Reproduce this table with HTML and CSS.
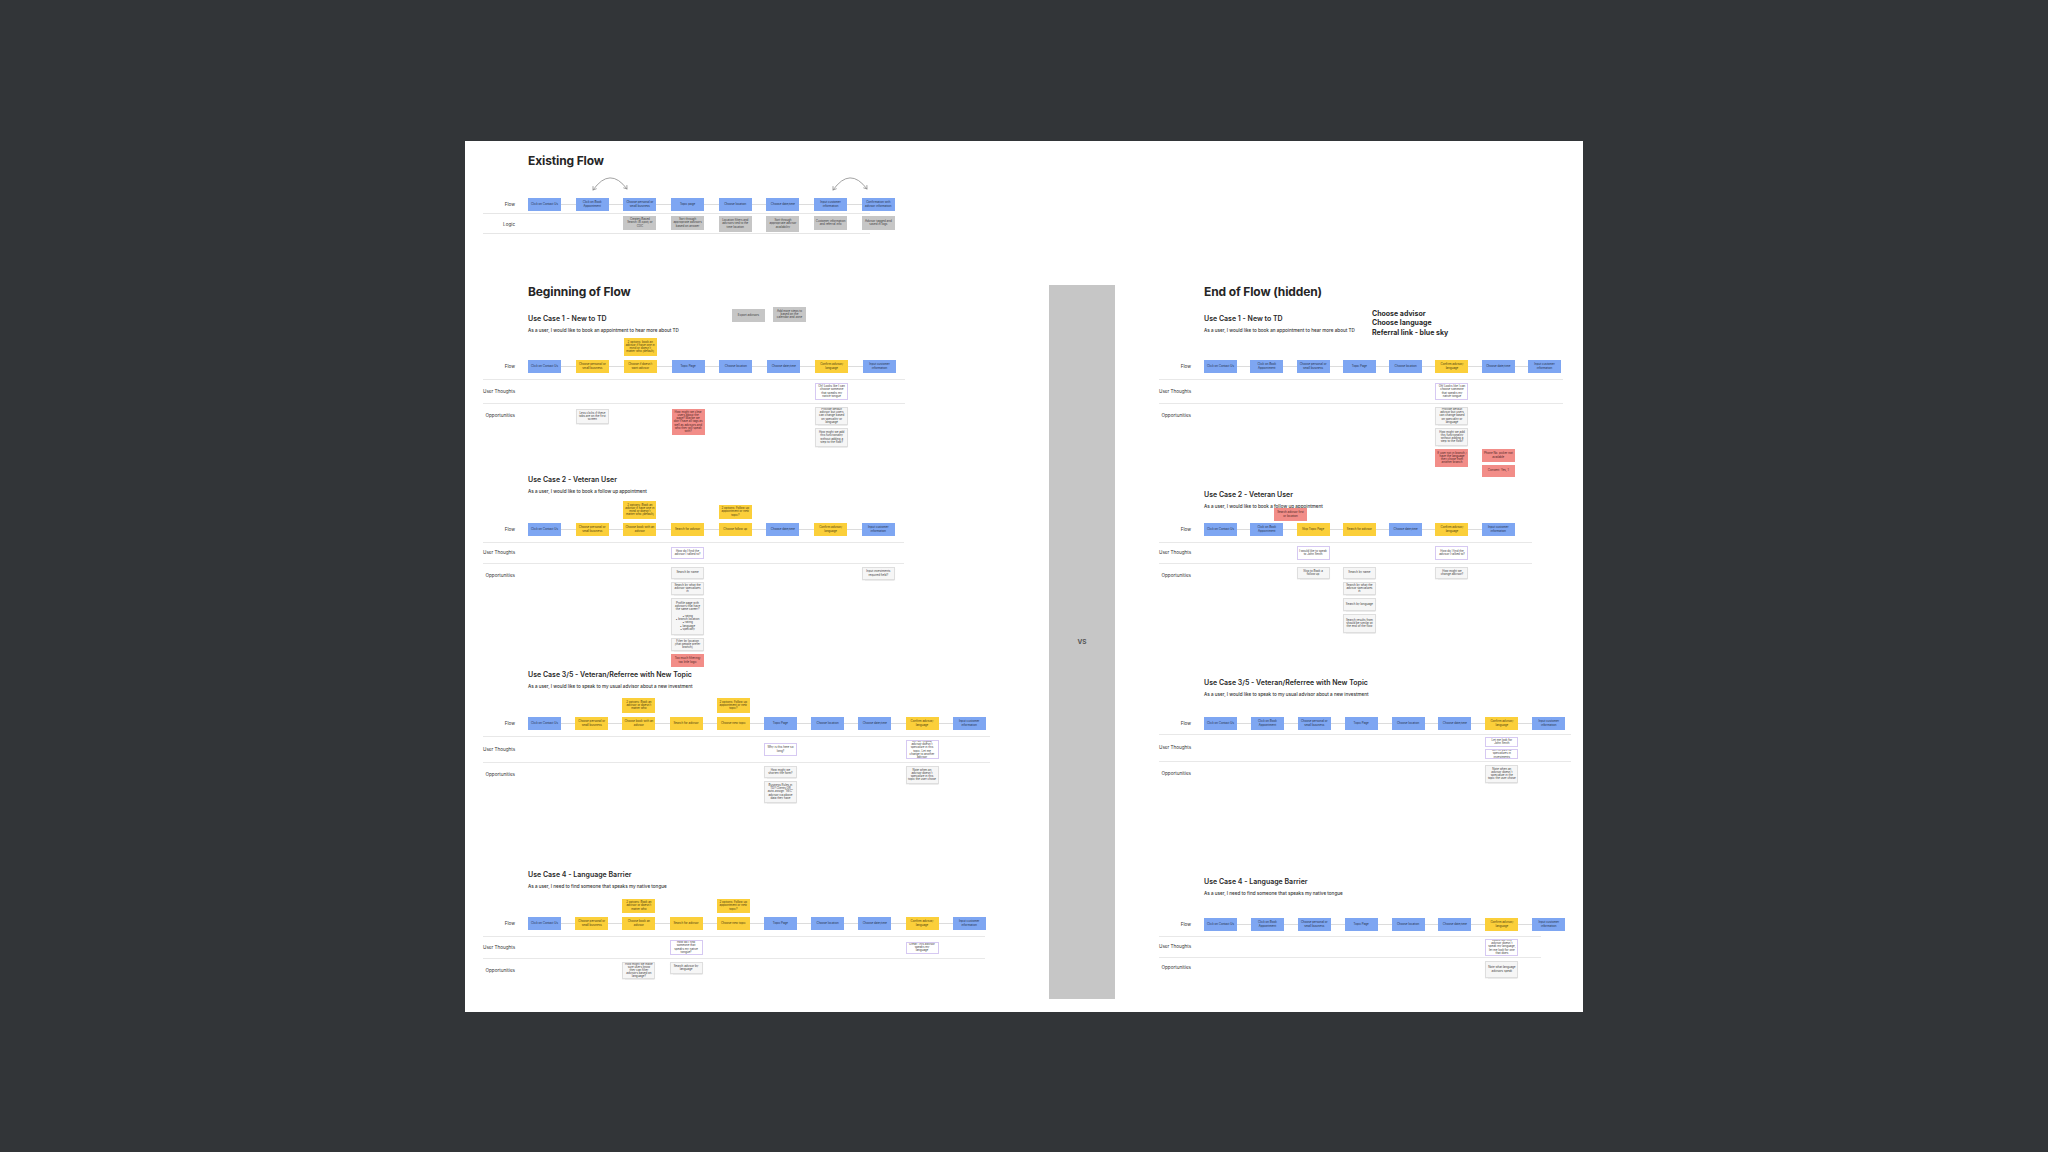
FILE: index.html
```html
<!DOCTYPE html>
<html>
<head>
<meta charset="utf-8">
<title>Flow board</title>
<link rel="stylesheet" href="styles.css">
</head>
<body>
<div class="board">
  <section class="ex">
    <h2 class="title">Existing Flow</h2>
    <svg class="arrows" viewBox="0 0 380 30" width="380" height="30">
      <path d="M65 22 Q82 -2 99 21" />
      <path d="M68.3 20.8 L65 22 L65 18.5" />
      <path d="M98.9 17.5 L99 21 L95.7 19.9" />
      <path d="M305 22 Q322 -2 339 21" />
      <path d="M308.3 20.8 L305 22 L305 18.5" />
      <path d="M338.9 17.5 L339 21 L335.7 19.9" />
    </svg>
    <div class="lane flow">
      <div class="lbl">Flow</div>
      <div class="cells">
        <div class="cell"><div class="c b">Click on Contact Us</div></div>
        <div class="cell"><div class="c b">Click on Book Appointment</div></div>
        <div class="cell"><div class="c b">Choose personal or small business</div></div>
        <div class="cell"><div class="c b">Topic page</div></div>
        <div class="cell"><div class="c b">Choose location</div></div>
        <div class="cell"><div class="c b">Choose date/time</div></div>
        <div class="cell"><div class="c b">Input customer information</div></div>
        <div class="cell"><div class="c b">Confirmation with advisor information</div></div>
      </div>
    </div>
    <div class="lane logic">
      <div class="lbl">Logic</div>
      <div class="cells">
        <div class="cell"></div>
        <div class="cell"></div>
        <div class="cell"><div class="c g">Creates Based Search (B-spot) or COC</div></div>
        <div class="cell"><div class="c g">Sort through appropriate advisors based on answer</div></div>
        <div class="cell"><div class="c g h16">Location filters and advisors tied to the time location</div></div>
        <div class="cell"><div class="c g h16">Sort through appropriate advisor availability</div></div>
        <div class="cell"><div class="c g">Customer information and referral info</div></div>
        <div class="cell"><div class="c g">Advisor tagged and saved in logs</div></div>
      </div>
    </div>
  </section>

  <div class="row">
    <div class="col col-left">
      <h2 class="title">Beginning of Flow</h2>

      <section class="uc s-l1">
        <div class="head">
          <h3>Use Case 1 - New to TD</h3>
          <p>As a user, I would like to book an appointment to hear more about TD</p>
        </div>
        <div class="notes">
          <div class="c g h13">Export advisors</div>
          <div class="c g h15">Add more steps to based on the calendar and zone</div>
        </div>
        <div class="lane above">
          <div class="lbl"></div>
          <div class="cells">
            <div class="cell"></div><div class="cell"></div>
            <div class="cell"><div class="c y h18">2 options: book an advisor if have one in mind or doesn't matter who (default)</div></div>
            <div class="cell"></div><div class="cell"></div><div class="cell"></div><div class="cell"></div><div class="cell"></div>
          </div>
        </div>
        <div class="lane flow">
          <div class="lbl">Flow</div>
          <div class="cells">
            <div class="cell"><div class="c b">Click on Contact Us</div></div>
            <div class="cell"><div class="c y">Choose personal or small business</div></div>
            <div class="cell"><div class="c y">Choose if doesn't want advisor</div></div>
            <div class="cell"><div class="c b">Topic Page</div></div>
            <div class="cell"><div class="c b">Choose location</div></div>
            <div class="cell"><div class="c b">Choose date/time</div></div>
            <div class="cell"><div class="c y">Confirm advisor/ language</div></div>
            <div class="cell"><div class="c b">Input customer information</div></div>
          </div>
        </div>
        <div class="lane thoughts">
          <div class="lbl">User Thoughts</div>
          <div class="cells">
            <div class="cell"></div><div class="cell"></div><div class="cell"></div><div class="cell"></div><div class="cell"></div><div class="cell"></div>
            <div class="cell"><div class="c t h17">Oh! Looks like I can choose someone that speaks my native tongue</div></div>
            <div class="cell"></div>
          </div>
        </div>
        <div class="lane opps">
          <div class="lbl">Opportunities</div>
          <div class="cells">
            <div class="cell"></div>
            <div class="cell"><div class="c w h15 down">Less clicks if these tabs are on the first screen</div></div>
            <div class="cell"></div>
            <div class="cell"><div class="c r h26 down">How might we clear users about the page? Maybe we don't have all tags as well as advisors and who they will speak with?</div></div>
            <div class="cell"></div><div class="cell"></div>
            <div class="cell"><div class="c w h18">Provide default advisor but users can change based on speciality or language</div><div class="c w h19">How might we add this functionality without adding a step to the flow?</div></div>
            <div class="cell"></div>
          </div>
        </div>
      </section>

      <section class="uc s-l2">
        <div class="head">
          <h3>Use Case 2 - Veteran User</h3>
          <p>As a user, I would like to book a follow up appointment</p>
        </div>
        <div class="lane above">
          <div class="lbl"></div>
          <div class="cells">
            <div class="cell"></div><div class="cell"></div>
            <div class="cell"><div class="c y h18">2 options: Book an advisor if have one in mind or doesn't matter who (default)</div></div>
            <div class="cell"></div>
            <div class="cell"><div class="c y h14">2 options: Follow up appointment or new topic?</div></div>
            <div class="cell"></div><div class="cell"></div><div class="cell"></div>
          </div>
        </div>
        <div class="lane flow">
          <div class="lbl">Flow</div>
          <div class="cells">
            <div class="cell"><div class="c b">Click on Contact Us</div></div>
            <div class="cell"><div class="c y">Choose personal or small business</div></div>
            <div class="cell"><div class="c y">Choose book with an advisor</div></div>
            <div class="cell"><div class="c y">Search for advisor</div></div>
            <div class="cell"><div class="c y">Choose follow up</div></div>
            <div class="cell"><div class="c b">Choose date/time</div></div>
            <div class="cell"><div class="c y">Confirm advisor/ language</div></div>
            <div class="cell"><div class="c b">Input customer information</div></div>
          </div>
        </div>
        <div class="lane thoughts">
          <div class="lbl">User Thoughts</div>
          <div class="cells">
            <div class="cell"></div><div class="cell"></div><div class="cell"></div>
            <div class="cell"><div class="c t h12">How do I find the advisor I talked to?</div></div>
            <div class="cell"></div><div class="cell"></div><div class="cell"></div><div class="cell"></div>
          </div>
        </div>
        <div class="lane opps">
          <div class="lbl">Opportunities</div>
          <div class="cells">
            <div class="cell"></div><div class="cell"></div><div class="cell"></div>
            <div class="cell">
              <div class="c w h12">Search by name</div>
              <div class="c w h13">Search by what the advisor specializes in</div>
              <div class="c w h37">Profile page with advisors that have the same career?<br><br>• rating<br>• branch location<br>• rating<br>• language<br>• specialty</div>
              <div class="c w h13">Filter by location (that people prefer branch)</div>
              <div class="c r h13">Too much filtering/ too little logic</div>
            </div>
            <div class="cell"></div><div class="cell"></div><div class="cell"></div>
            <div class="cell"><div class="c w h13">Input investments required field?</div></div>
          </div>
        </div>
      </section>

      <section class="uc s-l3">
        <div class="head">
          <h3>Use Case 3/5 - Veteran/Referree with New Topic</h3>
          <p>As a user, I would like to speak to my usual advisor about a new investment</p>
        </div>
        <div class="lane above">
          <div class="lbl"></div>
          <div class="cells">
            <div class="cell"></div><div class="cell"></div>
            <div class="cell"><div class="c y h15">2 options: Book an advisor or doesn't matter who</div></div>
            <div class="cell"></div>
            <div class="cell"><div class="c y h15">2 options: Follow up appointment or new topic?</div></div>
            <div class="cell"></div><div class="cell"></div><div class="cell"></div><div class="cell"></div><div class="cell"></div>
          </div>
        </div>
        <div class="lane flow">
          <div class="lbl">Flow</div>
          <div class="cells">
            <div class="cell"><div class="c b">Click on Contact Us</div></div>
            <div class="cell"><div class="c y">Choose personal or small business</div></div>
            <div class="cell"><div class="c y">Choose book with an advisor</div></div>
            <div class="cell"><div class="c y">Search for advisor</div></div>
            <div class="cell"><div class="c y">Choose new topic</div></div>
            <div class="cell"><div class="c b">Topic Page</div></div>
            <div class="cell"><div class="c b">Choose location</div></div>
            <div class="cell"><div class="c b">Choose date/time</div></div>
            <div class="cell"><div class="c y">Confirm advisor/ language</div></div>
            <div class="cell"><div class="c b">Input customer information</div></div>
          </div>
        </div>
        <div class="lane thoughts">
          <div class="lbl">User Thoughts</div>
          <div class="cells">
            <div class="cell"></div><div class="cell"></div><div class="cell"></div><div class="cell"></div><div class="cell"></div>
            <div class="cell"><div class="c t h13">Why is this here so long?</div></div>
            <div class="cell"></div><div class="cell"></div>
            <div class="cell"><div class="c t h19">Oh! My regular advisor doesn't specialize in this topic. Let me change to another advisor</div></div>
            <div class="cell"></div>
          </div>
        </div>
        <div class="lane opps">
          <div class="lbl">Opportunities</div>
          <div class="cells">
            <div class="cell"></div><div class="cell"></div><div class="cell"></div><div class="cell"></div><div class="cell"></div>
            <div class="cell"><div class="c w h12">How might we shorten the form?</div><div class="c w h22">Business Rules in TD? Clients OR auto-assign "SEC" advisor via above data they have</div></div>
            <div class="cell"></div><div class="cell"></div>
            <div class="cell"><div class="c w h18">Note when an advisor doesn't specialize in this topic the user chose</div></div>
            <div class="cell"></div>
          </div>
        </div>
      </section>

      <section class="uc s-l4">
        <div class="head">
          <h3>Use Case 4 - Language Barrier</h3>
          <p>As a user, I need to find someone that speaks my native tongue</p>
        </div>
        <div class="lane above">
          <div class="lbl"></div>
          <div class="cells">
            <div class="cell"></div><div class="cell"></div>
            <div class="cell"><div class="c y h14">2 options: Book an advisor or doesn't matter who</div></div>
            <div class="cell"></div>
            <div class="cell"><div class="c y h14">2 options: Follow up appointment or new topic?</div></div>
            <div class="cell"></div><div class="cell"></div><div class="cell"></div><div class="cell"></div><div class="cell"></div>
          </div>
        </div>
        <div class="lane flow">
          <div class="lbl">Flow</div>
          <div class="cells">
            <div class="cell"><div class="c b">Click on Contact Us</div></div>
            <div class="cell"><div class="c y">Choose personal or small business</div></div>
            <div class="cell"><div class="c y">Choose book an advisor</div></div>
            <div class="cell"><div class="c y">Search for advisor</div></div>
            <div class="cell"><div class="c y">Choose new topic</div></div>
            <div class="cell"><div class="c b">Topic Page</div></div>
            <div class="cell"><div class="c b">Choose location</div></div>
            <div class="cell"><div class="c b">Choose date/time</div></div>
            <div class="cell"><div class="c y">Confirm advisor/ language</div></div>
            <div class="cell"><div class="c b">Input customer information</div></div>
          </div>
        </div>
        <div class="lane thoughts">
          <div class="lbl">User Thoughts</div>
          <div class="cells">
            <div class="cell"></div><div class="cell"></div><div class="cell"></div>
            <div class="cell"><div class="c t h15">How do I find someone that speaks my native tongue?</div></div>
            <div class="cell"></div><div class="cell"></div><div class="cell"></div><div class="cell"></div>
            <div class="cell"><div class="c t h12">Great! This advisor speaks my language</div></div>
            <div class="cell"></div>
          </div>
        </div>
        <div class="lane opps">
          <div class="lbl">Opportunities</div>
          <div class="cells">
            <div class="cell"></div><div class="cell"></div>
            <div class="cell"><div class="c w h17">How might we make sure users know they can filter advisors based on language?</div></div>
            <div class="cell"><div class="c w h12">Search advisor by language</div></div>
            <div class="cell"></div><div class="cell"></div><div class="cell"></div><div class="cell"></div><div class="cell"></div><div class="cell"></div>
          </div>
        </div>
      </section>
    </div>

    <div class="vs">VS</div>

    <div class="col col-right">
      <h2 class="title">End of Flow (hidden)</h2>

      <section class="uc s-r1">
        <div class="head">
          <h3>Use Case 1 - New to TD</h3>
          <p>As a user, I would like to book an appointment to hear more about TD</p>
        </div>
        <div class="note">Choose advisor<br>Choose language<br>Referral link - blue sky</div>
        <div class="lane above"><div class="lbl"></div></div>
        <div class="lane flow">
          <div class="lbl">Flow</div>
          <div class="cells">
            <div class="cell"><div class="c b">Click on Contact Us</div></div>
            <div class="cell"><div class="c b">Click on Book Appointment</div></div>
            <div class="cell"><div class="c b">Choose personal or small business</div></div>
            <div class="cell"><div class="c b">Topic Page</div></div>
            <div class="cell"><div class="c b">Choose location</div></div>
            <div class="cell"><div class="c y">Confirm advisor/ language</div></div>
            <div class="cell"><div class="c b">Choose date/time</div></div>
            <div class="cell"><div class="c b">Input customer information</div></div>
          </div>
        </div>
        <div class="lane thoughts">
          <div class="lbl">User Thoughts</div>
          <div class="cells">
            <div class="cell"></div><div class="cell"></div><div class="cell"></div><div class="cell"></div><div class="cell"></div>
            <div class="cell"><div class="c t h17">Oh! Looks like I can choose someone that speaks my native tongue</div></div>
            <div class="cell"></div><div class="cell"></div>
          </div>
        </div>
        <div class="lane opps">
          <div class="lbl">Opportunities</div>
          <div class="cells">
            <div class="cell"></div><div class="cell"></div><div class="cell"></div><div class="cell"></div><div class="cell"></div>
            <div class="cell">
              <div class="c w h18">Provide default advisor but users can change based on speciality or language</div>
              <div class="c w h18">How might we add this functionality without adding a step to the flow?</div>
              <div class="c r h18">If user not in branch / have the language they chose from another branch</div>
            </div>
            <div class="cell push"><div class="c r h13">Phone No. picker not available</div><div class="c r h12">Consent: Yes, 1</div></div>
            <div class="cell"></div>
          </div>
        </div>
      </section>

      <section class="uc s-r2">
        <div class="head">
          <h3>Use Case 2 - Veteran User</h3>
          <p>As a user, I would like to book a follow up appointment</p>
        </div>
        <div class="c r h13 overlay">Search advisor first or location</div>
        <div class="lane above"><div class="lbl"></div></div>
        <div class="lane flow">
          <div class="lbl">Flow</div>
          <div class="cells">
            <div class="cell"><div class="c b">Click on Contact Us</div></div>
            <div class="cell"><div class="c b">Click on Book Appointment</div></div>
            <div class="cell"><div class="c y">Skip Topic Page</div></div>
            <div class="cell"><div class="c y">Search for advisor</div></div>
            <div class="cell"><div class="c b">Choose date/time</div></div>
            <div class="cell"><div class="c y">Confirm advisor/ language</div></div>
            <div class="cell"><div class="c b">Input customer information</div></div>
          </div>
        </div>
        <div class="lane thoughts">
          <div class="lbl">User Thoughts</div>
          <div class="cells">
            <div class="cell"></div><div class="cell"></div>
            <div class="cell"><div class="c t h14">I would like to speak to John Smith</div></div>
            <div class="cell"></div><div class="cell"></div>
            <div class="cell"><div class="c t h14">How do I find the advisor I talked to?</div></div>
            <div class="cell"></div>
          </div>
        </div>
        <div class="lane opps">
          <div class="lbl">Opportunities</div>
          <div class="cells">
            <div class="cell"></div><div class="cell"></div>
            <div class="cell"><div class="c w h12">Skip to Book a follow up</div></div>
            <div class="cell">
              <div class="c w h12">Search by name</div>
              <div class="c w h13">Search by what the advisor specializes in</div>
              <div class="c w h13">Search by language</div>
              <div class="c w h19">Search results from should be similar at the end of the flow</div>
            </div>
            <div class="cell"></div>
            <div class="cell"><div class="c w h12">How might we change advisor?</div></div>
            <div class="cell"></div>
          </div>
        </div>
      </section>

      <section class="uc s-r3">
        <div class="head">
          <h3>Use Case 3/5 - Veteran/Referree with New Topic</h3>
          <p>As a user, I would like to speak to my usual advisor about a new investment</p>
        </div>
        <div class="lane above"><div class="lbl"></div></div>
        <div class="lane flow">
          <div class="lbl">Flow</div>
          <div class="cells">
            <div class="cell"><div class="c b">Click on Contact Us</div></div>
            <div class="cell"><div class="c b">Click on Book Appointment</div></div>
            <div class="cell"><div class="c b">Choose personal or small business</div></div>
            <div class="cell"><div class="c b">Topic Page</div></div>
            <div class="cell"><div class="c b">Choose location</div></div>
            <div class="cell"><div class="c b">Choose date/time</div></div>
            <div class="cell"><div class="c y">Confirm advisor/ language</div></div>
            <div class="cell"><div class="c b">Input customer information</div></div>
          </div>
        </div>
        <div class="lane thoughts">
          <div class="lbl">User Thoughts</div>
          <div class="cells">
            <div class="cell"></div><div class="cell"></div><div class="cell"></div><div class="cell"></div><div class="cell"></div><div class="cell"></div>
            <div class="cell tight"><div class="c t h10">Let me look for John Smith</div><div class="c t h10">Oh I'm sure he specializes in investments</div></div>
            <div class="cell"></div>
          </div>
        </div>
        <div class="lane opps">
          <div class="lbl">Opportunities</div>
          <div class="cells">
            <div class="cell"></div><div class="cell"></div><div class="cell"></div><div class="cell"></div><div class="cell"></div><div class="cell"></div>
            <div class="cell"><div class="c w h18">Note when an advisor doesn't specialize in the topic the user chose</div></div>
            <div class="cell"></div>
          </div>
        </div>
      </section>

      <section class="uc s-r4">
        <div class="head">
          <h3>Use Case 4 - Language Barrier</h3>
          <p>As a user, I need to find someone that speaks my native tongue</p>
        </div>
        <div class="lane above"><div class="lbl"></div></div>
        <div class="lane flow">
          <div class="lbl">Flow</div>
          <div class="cells">
            <div class="cell"><div class="c b">Click on Contact Us</div></div>
            <div class="cell"><div class="c b">Click on Book Appointment</div></div>
            <div class="cell"><div class="c b">Choose personal or small business</div></div>
            <div class="cell"><div class="c b">Topic Page</div></div>
            <div class="cell"><div class="c b">Choose location</div></div>
            <div class="cell"><div class="c b">Choose date/time</div></div>
            <div class="cell"><div class="c y">Confirm advisor/ language</div></div>
            <div class="cell"><div class="c b">Input customer information</div></div>
          </div>
        </div>
        <div class="lane thoughts">
          <div class="lbl">User Thoughts</div>
          <div class="cells">
            <div class="cell"></div><div class="cell"></div><div class="cell"></div><div class="cell"></div><div class="cell"></div><div class="cell"></div>
            <div class="cell"><div class="c t h17">Looks like this advisor doesn't speak my language, let me look for one that does</div></div>
            <div class="cell"></div>
          </div>
        </div>
        <div class="lane opps">
          <div class="lbl">Opportunities</div>
          <div class="cells">
            <div class="cell"></div><div class="cell"></div><div class="cell"></div><div class="cell"></div><div class="cell"></div><div class="cell"></div>
            <div class="cell"><div class="c w h17">Note what language advisors speak</div></div>
            <div class="cell"></div>
          </div>
        </div>
      </section>
    </div>
  </div>
</div>
</body>
</html>
```

FILE: styles.css
```css
* { box-sizing: border-box; margin: 0; padding: 0; }

html, body { height: 100%; }

body {
  background: #323538;
  padding: 141px 0 0 465px;
  font-family: Inter, "Noto Sans", "Liberation Sans", sans-serif;
  color: #2a2a2a;
  overflow: hidden;
}

.board {
  width: 1118px;
  height: 871px;
  background: #ffffff;
  padding: 13px 0 0 18px;
}

.title {
  font-size: 12px;
  line-height: 14px;
  font-weight: 700;
  letter-spacing: -0.01em;
  padding-left: 45px;
  color: #262626;
}

/* existing flow */
.ex { --n: 8; --g: 14.7px; --w: 387px; }

.arrows {
  display: block;
  margin-left: 45px;
  width: 380px;
  height: 30px;
  fill: none;
  stroke: #8c8c8c;
  stroke-width: 0.8;
  stroke-linecap: round;
  stroke-linejoin: round;
}

.ex .flow { padding-bottom: 2px; border-bottom: 1px solid #e6e6e6; }
.ex .logic { height: 20px; padding-top: 2px; border-bottom: 1px solid #e6e6e6; }
.ex .logic .cells { align-items: start; }
.ex .logic .c { height: 14px; }
.ex .logic .c.h16 { height: 16px; }

/* lanes */
.lane {
  display: flex;
  width: var(--w);
}

.lbl {
  flex: none;
  width: 45px;
  padding-right: 13px;
  text-align: right;
  font-size: 4.6px;
  line-height: 6px;
  color: #333;
  align-self: center;
  white-space: nowrap;
}

.cells {
  flex: none;
  display: grid;
  grid-template-columns: repeat(var(--n), 33px);
  column-gap: var(--g);
}

.cell {
  display: flex;
  flex-direction: column;
  gap: 3px;
}
.cell.tight { gap: 2px; }

.flow .cells {
  background: linear-gradient(#dcdcdc, #dcdcdc) center / 100% 1px no-repeat;
}

.flow { padding-bottom: 6px; }

.above { height: var(--ah); }
.above .cells { align-items: end; padding-bottom: 4px; height: 100%; }

.thoughts {
  border-top: 1px solid #e8e8e8;
  padding: 3px 0;
  min-height: 21px;
}
.thoughts .cells { align-items: center; }

.opps {
  border-top: 1px solid #e8e8e8;
  padding-top: 3px;
}
.opps .lbl { align-self: flex-start; margin-top: 6px; }
.opps .cells { align-items: start; }

.push { padding-top: 42px; }
.down { margin-top: 2px; }

/* cards */
.c {
  flex: none;
  width: 33px;
  min-height: 12px;
  padding: 1.5px 1.5px;
  font-size: 2.9px;
  line-height: 3.2px;
  text-align: center;
  display: flex;
  align-items: center;
  justify-content: center;
  color: #3a3a3a;
  overflow: hidden;
}

.flow .c { height: 13px; min-height: 13px; padding: 1px 2px; }

.b { background: #7ea6f2; color: #26324a; }
.y { background: #fbcf3a; color: #4a3b10; }
.g { background: #c6c6c6; color: #3a3a3a; }
.r { background: #f28d88; color: #4a2422; }
.w {
  background: #f6f6f6;
  border: 0.6px solid #dedede;
  box-shadow: 0 0.5px 1px rgba(0, 0, 0, 0.08);
}
.t {
  background: #ffffff;
  border: 0.7px solid #d6c9f2;
}

.h10 { min-height: 10px; height: 10px; }
.h12 { height: 12px; }
.h13 { height: 13px; }
.h14 { height: 14px; }
.h15 { height: 15px; }
.h16 { height: 16px; }
.h17 { height: 17px; }
.h18 { height: 18px; }
.h19 { height: 19px; }
.h22 { height: 22px; }
.h26 { height: 26px; }
.h37 { height: 37px; }

/* bottom area */
.row {
  display: flex;
  align-items: flex-start;
  margin-top: 51px;
}

.col-left { flex: none; width: 566px; }

.vs {
  flex: none;
  width: 66px;
  height: 714px;
  background: #c6c6c6;
  display: flex;
  align-items: center;
  justify-content: center;
  font-size: 6.5px;
  font-weight: 700;
  color: #555;
}

.col-right { flex: none; width: 420px; margin-left: 44px; }

/* use case sections */
.uc { position: relative; }
.col .title + .uc { margin-top: 15px; }

.head { padding-left: 45px; }
.head h3 {
  font-size: 7px;
  line-height: 9px;
  font-weight: 600;
  color: #2a2a2a;
  white-space: nowrap;
}
.head p {
  margin-top: 5px;
  font-size: 4.6px;
  line-height: 6px;
  font-weight: 500;
  color: #333;
  white-space: nowrap;
}

.notes {
  position: absolute;
  left: 249px;
  top: -7px;
  height: 15px;
  display: flex;
  align-items: flex-end;
  gap: 8px;
}

.note {
  position: absolute;
  left: 213px;
  top: -5px;
  font-size: 7px;
  line-height: 9.3px;
  font-weight: 700;
  color: #2b2b2b;
  white-space: nowrap;
}

.overlay {
  position: absolute;
  left: 115px;
  top: 18px;
}

.s-l1 { --n: 8; --g: 14.86px; --w: 422px; --ah: 26px; height: 161px; }
.s-l2 { --n: 8; --g: 14.7px; --w: 421px; --ah: 28px; height: 195px; }
.s-l3 { --n: 10; --g: 14.2px; --w: 507px; --ah: 27px; height: 200px; }
.s-l4 { --n: 10; --g: 14.2px; --w: 502px; --ah: 27px; }

.s-r1 { --n: 8; --g: 13.3px; --w: 404px; --ah: 26px; height: 176px; }
.s-r2 { --n: 7; --g: 13.3px; --w: 373px; --ah: 13px; height: 188px; }
.s-r3 { --n: 8; --g: 13.9px; --w: 412px; --ah: 19px; height: 199px; }
.s-r4 { --n: 8; --g: 13.9px; --w: 382px; --ah: 21px; }

.s-r3 .flow { padding-bottom: 4px; }
.s-r3 .thoughts { padding: 2px 0; }
.s-r4 .flow { padding-bottom: 5px; }
.s-r4 .thoughts { padding: 1px 0; }
.s-r4 .opps .lbl { margin-top: 4px; }
```
